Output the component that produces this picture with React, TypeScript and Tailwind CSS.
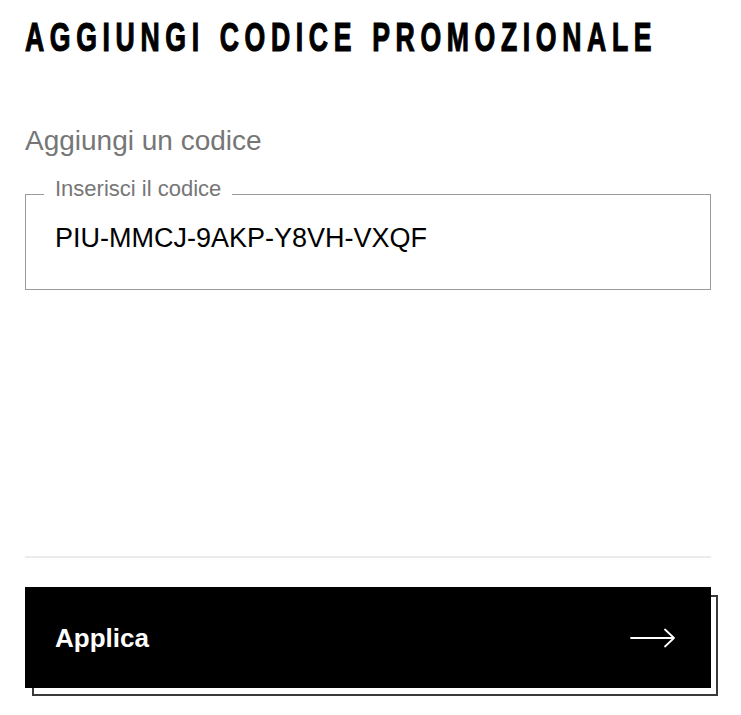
import React from 'react'

function ArrowRight() {
  return (
    <svg width="46" height="20" viewBox="0 0 46 20" fill="none" aria-hidden="true">
      <path d="M1 10h43M35 1.5l9 8.5-9 8.5" stroke="white" strokeWidth="1.8" strokeLinecap="round" strokeLinejoin="round" />
    </svg>
  )
}

export default function App() {
  return (
    <div className="min-h-[715px] w-[741px] overflow-hidden bg-white pl-[25px] pr-[30px] pt-[17px] font-['Liberation_Sans',Arial,sans-serif]">
      {/* condensed display face, approximated with a horizontal squeeze */}
      <h1 className="origin-left scale-x-[0.665] whitespace-nowrap text-[40px] leading-[40px] font-bold uppercase tracking-[8.5px] text-black [word-spacing:3px] [-webkit-text-stroke:1.2px_black]">
        Aggiungi codice promozionale
      </h1>

      <p className="mt-[68px] text-[28px] leading-[32px] text-[#767677]">Aggiungi un codice</p>

      <div className="relative mt-[37px] h-[96px] border border-[#9b9b9b] pl-[29px] pt-[26px]">
        <span className="absolute left-[18px] top-[-17px] bg-white px-[11px] text-[22px] leading-[21px] text-[#767677]">
          Inserisci il codice
        </span>
        <div className="text-[27px] leading-[35px] text-black">PIU-MMCJ-9AKP-Y8VH-VXQF</div>
      </div>

      <div className="mt-[266px] h-[2px] bg-[#ebebeb]" />

      <div className="relative mt-[29px] h-[101px]">
        <div className="absolute inset-0 translate-x-[7px] translate-y-[8px] border-2 border-[#3a3a3a]" aria-hidden="true" />
        <button className="relative flex h-full w-full items-center justify-between bg-black pl-[30px] pr-[35px] text-white">
          <span className="text-[26px] font-bold leading-none">Applica</span>
          <ArrowRight />
        </button>
      </div>
    </div>
  )
}
